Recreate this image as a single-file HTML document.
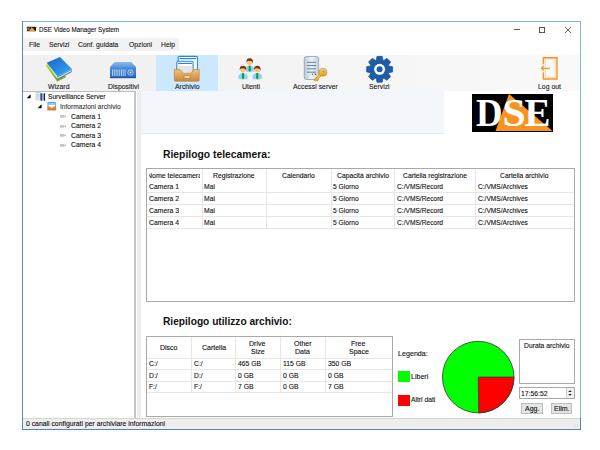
<!DOCTYPE html>
<html><head><meta charset="utf-8"><style>
html,body{margin:0;padding:0;width:600px;height:450px;overflow:hidden;background:#fff;position:relative;}
.r{position:absolute;}
.t{position:absolute;white-space:nowrap;font-family:"Liberation Sans", sans-serif;}
svg text{font-family:"Liberation Serif", serif;}
</style></head><body>
<div class="r" style="left:22px;top:21px;width:559px;height:409px;background:#fff;box-sizing:border-box;border:1px solid #7ab8ea;border-left-color:#4f8cc6;border-bottom-color:#4a86c0;"></div>
<svg class="r" style="left:26px;top:26px" width="12" height="7" viewBox="0 0 12 7"><rect x="0.9" y="0.8" width="9.2" height="4.4" rx="0.4" fill="#1c1c24"/><path d="M3.2 5.2 L5.6 1 L9.6 5.2 Z" fill="#f7a21e"/><rect x="1.5" y="1.6" width="1.3" height="2.8" fill="#8a8a90"/><rect x="3" y="1.6" width="1" height="2.8" fill="#6a6a70"/></svg>
<div class="t" style="left:38.50px;top:25.85px;font-size:7.5px;line-height:7.5px;color:#111;font-weight:400;transform-origin:0 0;transform:scaleX(0.8402);-webkit-text-stroke:0.12px #111;">DSE Video Manager System</div>
<div class="r" style="left:514px;top:29px;width:6px;height:1px;background:#555;"></div>
<div class="r" style="left:539px;top:27px;width:6px;height:6px;box-sizing:border-box;border:1px solid #555;"></div>
<svg class="r" style="left:564px;top:26px" width="8" height="8" viewBox="0 0 8 8"><path d="M1 1 L7 7 M7 1 L1 7" stroke="#333" stroke-width="0.75"/></svg>
<div class="r" style="left:23px;top:38px;width:156px;height:13px;background:#f2f2f2;"></div>
<div class="t" style="left:28.69px;top:41.15px;font-size:7.5px;line-height:7.5px;color:#1a1a1a;font-weight:400;transform-origin:0 0;transform:scaleX(0.9005);-webkit-text-stroke:0.12px #1a1a1a;">File</div>
<div class="t" style="left:49.19px;top:41.15px;font-size:7.5px;line-height:7.5px;color:#1a1a1a;font-weight:400;transform-origin:0 0;transform:scaleX(0.9022);-webkit-text-stroke:0.12px #1a1a1a;">Servizi</div>
<div class="t" style="left:78.00px;top:41.15px;font-size:7.5px;line-height:7.5px;color:#1a1a1a;font-weight:400;transform-origin:0 0;transform:scaleX(0.9041);-webkit-text-stroke:0.12px #1a1a1a;">Conf. guidata</div>
<div class="t" style="left:128.69px;top:41.15px;font-size:7.5px;line-height:7.5px;color:#1a1a1a;font-weight:400;transform-origin:0 0;transform:scaleX(0.9060);-webkit-text-stroke:0.12px #1a1a1a;">Opzioni</div>
<div class="t" style="left:160.69px;top:41.15px;font-size:7.5px;line-height:7.5px;color:#1a1a1a;font-weight:400;transform-origin:0 0;transform:scaleX(0.9069);-webkit-text-stroke:0.12px #1a1a1a;">Help</div>
<div class="r" style="left:23px;top:55px;width:557px;height:36px;background:linear-gradient(to right,#f0f0f0 0%,#f2f2f2 30%,#f6f6f6 65%,#f9f9f9 100%);"></div>
<div class="r" style="left:156px;top:55px;width:62px;height:36px;background:#cce8ff;"></div>
<div class="t" style="left:48.25px;top:82.65px;font-size:7.5px;line-height:7.5px;color:#1a1a1a;font-weight:400;transform-origin:0 0;transform:scaleX(0.9203);-webkit-text-stroke:0.12px #1a1a1a;">Wizard</div>
<div class="t" style="left:107.52px;top:82.65px;font-size:7.5px;line-height:7.5px;color:#1a1a1a;font-weight:400;transform-origin:0 0;transform:scaleX(0.9172);-webkit-text-stroke:0.12px #1a1a1a;">Dispositivi</div>
<div class="t" style="left:174.75px;top:82.65px;font-size:7.5px;line-height:7.5px;color:#1a1a1a;font-weight:400;transform-origin:0 0;transform:scaleX(0.9180);-webkit-text-stroke:0.12px #1a1a1a;">Archivio</div>
<div class="t" style="left:242.00px;top:82.65px;font-size:7.5px;line-height:7.5px;color:#1a1a1a;font-weight:400;transform-origin:0 0;transform:scaleX(0.9187);-webkit-text-stroke:0.12px #1a1a1a;">Utenti</div>
<div class="t" style="left:292.59px;top:82.65px;font-size:7.5px;line-height:7.5px;color:#1a1a1a;font-weight:400;transform-origin:0 0;transform:scaleX(0.9189);-webkit-text-stroke:0.12px #1a1a1a;">Accessi server</div>
<div class="t" style="left:369.17px;top:82.65px;font-size:7.5px;line-height:7.5px;color:#1a1a1a;font-weight:400;transform-origin:0 0;transform:scaleX(0.9174);-webkit-text-stroke:0.12px #1a1a1a;">Servizi</div>
<div class="t" style="left:537.98px;top:82.65px;font-size:7.5px;line-height:7.5px;color:#1a1a1a;font-weight:400;transform-origin:0 0;transform:scaleX(0.9195);-webkit-text-stroke:0.12px #1a1a1a;">Log out</div>
<svg class="r" style="left:44px;top:54px" width="30" height="30" viewBox="0 0 30 30">
<defs><linearGradient id="bk" x1="0" y1="0" x2="1" y2="1"><stop offset="0" stop-color="#1a5fc8"/><stop offset="1" stop-color="#2fb0f2"/></linearGradient>
<linearGradient id="gr" x1="0" y1="0" x2="0" y2="1"><stop offset="0" stop-color="#c2ea2a"/><stop offset="1" stop-color="#62a814"/></linearGradient></defs>
<path d="M1.6 11.5 L13.2 27.6 L22 23.2 L21 21.5 L13.5 25 L3.2 9.8 Z" fill="url(#gr)"/>
<path d="M13.3 22.6 L27.7 15 L27.8 17.9 L13.6 25.5 Z" fill="#1e64bf"/>
<path d="M13.6 23.9 L27.5 16.5" stroke="#f4f4f4" stroke-width="1.1"/>
<path d="M16 3 L27.7 14.7 L13.3 22.3 L2.7 8.7 Z" fill="url(#bk)"/>
</svg>
<svg class="r" style="left:108px;top:60px" width="30" height="20" viewBox="0 0 30 20">
<defs><linearGradient id="nv" x1="0" y1="0" x2="0" y2="1"><stop offset="0" stop-color="#4f8fdc"/><stop offset="1" stop-color="#2a66bd"/></linearGradient>
<linearGradient id="nt" x1="0" y1="0" x2="0" y2="1"><stop offset="0" stop-color="#8dbbee"/><stop offset="1" stop-color="#5c97dc"/></linearGradient></defs>
<path d="M6.7 2 L23.3 2 L28 7 L2 7 Z" fill="url(#nt)"/>
<rect x="2" y="7" width="26" height="11" fill="url(#nv)"/>
<g stroke="#b9d6f6" stroke-width="0.9">
<path d="M4.5 9.5 V16 M6.3 9.5 V16 M8.1 9.5 V16 M9.9 9.5 V16 M11.7 9.5 V16 M13.5 9.5 V16 M15.3 9.5 V16 M17.1 9.5 V16"/></g>
<circle cx="22.5" cy="12.6" r="2.7" fill="none" stroke="#b9d6f6" stroke-width="0.9"/>
<circle cx="22.5" cy="12.4" r="1" fill="#dcebfb"/>
<rect x="2" y="17" width="26" height="1.2" fill="#1d54a3"/>
</svg>
<svg class="r" style="left:172px;top:54px" width="30" height="30" viewBox="0 0 30 30">
<defs><linearGradient id="tr" x1="0" y1="0" x2="0" y2="1"><stop offset="0" stop-color="#f0c27e"/><stop offset="1" stop-color="#c8883a"/></linearGradient></defs>
<rect x="6.2" y="2.4" width="19.2" height="16.5" rx="1.2" fill="#fff" stroke="#2e86d6" stroke-width="1.1"/>
<rect x="7.5" y="4" width="16.5" height="1.2" fill="#2e86d6"/>
<rect x="4.8" y="7.2" width="16.3" height="13" rx="1.2" fill="#fff" stroke="#2e86d6" stroke-width="1.1"/>
<rect x="6" y="8.8" width="14" height="1.2" fill="#2e86d6"/>
<rect x="6" y="12" width="14" height="6" fill="#e4e4e4"/>
<path d="M2.3 15.4 L8 15.4 L11 19 L19 19 L22 15.4 L27.2 15.4 L27.2 26 Q27.2 27.2 26 27.2 L3.5 27.2 Q2.3 27.2 2.3 26 Z" fill="url(#tr)" stroke="#b87a30" stroke-width="0.6"/>
<rect x="12" y="22" width="6" height="2" rx="0.8" fill="#fff" stroke="#a86a25" stroke-width="0.6"/>
</svg>
<svg class="r" style="left:234px;top:54px" width="34" height="30" viewBox="0 0 34 30">
<g transform="translate(15.7,8.0)">
<path d="M-5.2 8.2 Q-5.4 3.4 0 3.2 Q5.4 3.4 5.2 8.2 Q5 10.4 0 10.4 Q-5 10.4 -5.2 8.2 Z" fill="#93d1f5" stroke="#fff" stroke-width="0.6"/>
<path d="M-0.9 3.5 L0.9 3.5 L1.2 8.6 L0 9.8 L-1.2 8.6 Z" fill="#169a34"/>
<circle cx="0" cy="0.2" r="3.1" fill="#f8c28c" stroke="#fff" stroke-width="0.4"/>
<path d="M-3.3 0.4 Q-3.7 -3.7 0.2 -3.8 Q3.7 -3.5 3.3 1 Q2.6 -1.6 -1.2 -1.3 Q-2.6 -0.9 -3.3 0.4 Z" fill="#6e3510"/>
</g><g transform="translate(9,15.5)">
<path d="M-5.2 8.2 Q-5.4 3.4 0 3.2 Q5.4 3.4 5.2 8.2 Q5 10.4 0 10.4 Q-5 10.4 -5.2 8.2 Z" fill="#93d1f5" stroke="#fff" stroke-width="0.6"/>
<path d="M-0.9 3.5 L0.9 3.5 L1.2 8.6 L0 9.8 L-1.2 8.6 Z" fill="#169a34"/>
<circle cx="0" cy="0.2" r="3.1" fill="#f8c28c" stroke="#fff" stroke-width="0.4"/>
<path d="M-3.3 0.4 Q-3.7 -3.7 0.2 -3.8 Q3.7 -3.5 3.3 1 Q2.6 -1.6 -1.2 -1.3 Q-2.6 -0.9 -3.3 0.4 Z" fill="#6e3510"/>
</g><g transform="translate(23.3,15.5)">
<path d="M-5.2 8.2 Q-5.4 3.4 0 3.2 Q5.4 3.4 5.2 8.2 Q5 10.4 0 10.4 Q-5 10.4 -5.2 8.2 Z" fill="#93d1f5" stroke="#fff" stroke-width="0.6"/>
<path d="M-0.9 3.5 L0.9 3.5 L1.2 8.6 L0 9.8 L-1.2 8.6 Z" fill="#169a34"/>
<circle cx="0" cy="0.2" r="3.1" fill="#f8c28c" stroke="#fff" stroke-width="0.4"/>
<path d="M-3.3 0.4 Q-3.7 -3.7 0.2 -3.8 Q3.7 -3.5 3.3 1 Q2.6 -1.6 -1.2 -1.3 Q-2.6 -0.9 -3.3 0.4 Z" fill="#6e3510"/>
</g>
</svg>
<svg class="r" style="left:300px;top:54px" width="30" height="30" viewBox="0 0 30 30">
<defs><linearGradient id="sv" x1="0" y1="0" x2="1" y2="0"><stop offset="0" stop-color="#b8c8d8"/><stop offset="0.5" stop-color="#eef3f8"/><stop offset="1" stop-color="#c0ceda"/></linearGradient>
<linearGradient id="ky" x1="0" y1="0" x2="0" y2="1"><stop offset="0" stop-color="#ffd866"/><stop offset="1" stop-color="#e39a14"/></linearGradient></defs>
<rect x="4.3" y="2.5" width="14.3" height="23" rx="2" fill="url(#sv)" stroke="#8e9eb0" stroke-width="0.8"/>
<g stroke="#5f83a8" stroke-width="1"><path d="M7 8.3 H16 M7 11.5 H16 M7 14.8 H16 M7 18.2 H16"/></g>
<circle cx="12.5" cy="20.3" r="0.8" fill="#2aa83a"/><circle cx="15.3" cy="20.3" r="0.8" fill="#e02020"/>
<path d="M19.5 20.5 L13.8 26 L15.3 27.3 L16.5 26.3 L17.3 27 L18.5 25.8 L17.8 25 L21 22" stroke="#c98a12" stroke-width="0.6" fill="url(#ky)"/>
<circle cx="22.9" cy="18.3" r="4" fill="url(#ky)" stroke="#c98a12" stroke-width="0.6"/>
<circle cx="23.6" cy="17.5" r="1.2" fill="#9aa6b8"/>
</svg>
<svg class="r" style="left:364px;top:54px" width="32" height="32" viewBox="0 0 32 32">
<path d="M12.27 6.08 L13.02 2.36 L18.18 2.36 L18.93 6.08 L19.76 6.43 L22.93 4.32 L26.58 7.97 L24.47 11.14 L24.82 11.97 L28.54 12.72 L28.54 17.88 L24.82 18.63 L24.47 19.46 L26.58 22.63 L22.93 26.28 L19.76 24.17 L18.93 24.52 L18.18 28.24 L13.02 28.24 L12.27 24.52 L11.44 24.17 L8.27 26.28 L4.62 22.63 L6.73 19.46 L6.38 18.63 L2.66 17.88 L2.66 12.72 L6.38 11.97 L6.73 11.14 L4.62 7.97 L8.27 4.32 L11.44 6.43 Z" fill="#1f5ca6" stroke="#1f5ca6" stroke-width="0.8" stroke-linejoin="round"/>
<circle cx="15.6" cy="15.3" r="5.5" fill="#fff"/>
<circle cx="15.6" cy="15.3" r="3" fill="#1f5ca6"/>
</svg>
<svg class="r" style="left:536px;top:54px" width="28" height="30" viewBox="0 0 28 30">
<rect x="9.4" y="4.9" width="9.8" height="18.6" fill="none" stroke="#fbd3a0" stroke-width="0.8"/>
<path d="M7.4 10.3 V3.7 H21 V25 H7.4 V18.3" fill="none" stroke="#f7941d" stroke-width="1.4"/>
<path d="M14 14.3 H5.6 M7.8 12 L5.3 14.3 L7.8 16.6" fill="none" stroke="#f7941d" stroke-width="1.3"/>
</svg>
<div class="r" style="left:23px;top:91px;width:113px;height:328px;background:#fff;box-sizing:border-box;border-top:1px solid #bcbdc2;border-right:2px solid #c2c4ca;border-bottom:1px solid #b4b4b8;"></div>
<div class="r" style="left:137px;top:91px;width:4px;height:327px;background:#ececec;"></div>
<div class="r" style="left:141px;top:91px;width:303px;height:43px;background:#f3f7fb;box-sizing:border-box;border-bottom:1px solid #e3e9f0;"></div>
<svg class="r" style="left:26px;top:94px" width="5" height="5" viewBox="0 0 5 5"><path d="M4.3 0.6 Q4.6 0.4 4.6 0.9 L4.6 3.9 Q4.6 4.3 4.2 4.3 L1 4.3 Q0.6 4.3 0.9 4 Z" fill="#000"/></svg>
<svg class="r" style="left:35px;top:91px" width="11" height="11" viewBox="0 0 11 11"><rect x="0.5" y="0.2" width="2" height="1" fill="#c8d0d8"/><rect x="1" y="1.3" width="4.3" height="7.6" fill="#e6eef7" stroke="#a9bcd0" stroke-width="0.6"/><rect x="2" y="3" width="2.3" height="4" fill="#c5d8ee"/><rect x="5.5" y="2.4" width="4.6" height="7.2" fill="#9aa8e0"/><rect x="5.6" y="2.4" width="1.1" height="7.2" fill="#1f2233"/><rect x="8.9" y="2.4" width="1.1" height="7.2" fill="#1f2233"/></svg>
<div class="t" style="left:48.30px;top:93.15px;font-size:7.5px;line-height:7.5px;color:#111;font-weight:400;transform-origin:0 0;transform:scaleX(0.8837);-webkit-text-stroke:0.12px #111;">Surveillance Server</div>
<svg class="r" style="left:37px;top:103.8px" width="5" height="5" viewBox="0 0 5 5"><path d="M4.3 0.6 Q4.6 0.4 4.6 0.9 L4.6 3.9 Q4.6 4.3 4.2 4.3 L1 4.3 Q0.6 4.3 0.9 4 Z" fill="#000"/></svg>
<svg class="r" style="left:47px;top:101px" width="10" height="11" viewBox="0 0 10 11"><rect x="0.5" y="1" width="8.4" height="5.5" rx="0.5" fill="#52aae6"/><rect x="1.3" y="2.2" width="6.8" height="0.8" fill="#9fd0f2"/><rect x="1.4" y="3.6" width="6.6" height="3" fill="#fafafa"/><path d="M0.3 5.6 L2.8 5.6 L4.7 7.2 L6.6 5.6 L9.1 5.6 L9.1 9.6 L0.3 9.6 Z" fill="#d58b3e"/><path d="M0.3 8.3 L9.1 8.3" stroke="#b86f28" stroke-width="0.5"/></svg>
<div class="t" style="left:59.69px;top:102.65px;font-size:7.5px;line-height:7.5px;color:#3a3a3a;font-weight:400;transform-origin:0 0;transform:scaleX(0.8814);-webkit-text-stroke:0.12px #3a3a3a;">Informazioni archivio</div>
<svg class="r" style="left:59px;top:114.4px" width="8" height="5" viewBox="0 0 8 5"><path d="M1 1 L5 1 L5 3.8 L1 3.8 Z M5 1.8 L7.2 1.2 L7.2 3.4 L5 3 Z" fill="#c6c6c6"/></svg>
<div class="t" style="left:70.80px;top:112.65px;font-size:7.5px;line-height:7.5px;color:#111;font-weight:400;transform-origin:0 0;transform:scaleX(0.9089);-webkit-text-stroke:0.12px #111;">Camera 1</div>
<svg class="r" style="left:59px;top:123.8px" width="8" height="5" viewBox="0 0 8 5"><path d="M1 1 L5 1 L5 3.8 L1 3.8 Z M5 1.8 L7.2 1.2 L7.2 3.4 L5 3 Z" fill="#c6c6c6"/></svg>
<div class="t" style="left:70.80px;top:122.05px;font-size:7.5px;line-height:7.5px;color:#111;font-weight:400;transform-origin:0 0;transform:scaleX(0.9089);-webkit-text-stroke:0.12px #111;">Camera 2</div>
<svg class="r" style="left:59px;top:133.4px" width="8" height="5" viewBox="0 0 8 5"><path d="M1 1 L5 1 L5 3.8 L1 3.8 Z M5 1.8 L7.2 1.2 L7.2 3.4 L5 3 Z" fill="#c6c6c6"/></svg>
<div class="t" style="left:70.80px;top:131.65px;font-size:7.5px;line-height:7.5px;color:#111;font-weight:400;transform-origin:0 0;transform:scaleX(0.9089);-webkit-text-stroke:0.12px #111;">Camera 3</div>
<svg class="r" style="left:59px;top:142.9px" width="8" height="5" viewBox="0 0 8 5"><path d="M1 1 L5 1 L5 3.8 L1 3.8 Z M5 1.8 L7.2 1.2 L7.2 3.4 L5 3 Z" fill="#c6c6c6"/></svg>
<div class="t" style="left:70.80px;top:141.15px;font-size:7.5px;line-height:7.5px;color:#111;font-weight:400;transform-origin:0 0;transform:scaleX(0.9089);-webkit-text-stroke:0.12px #111;">Camera 4</div>
<svg class="r" style="left:472px;top:94px" width="81" height="38" viewBox="0 0 81 38">
<rect width="81" height="38" fill="#000"/>
<path d="M37 0 L80.5 37 L23.5 37 Z" fill="#f7941d"/>
<g font-family="Liberation Serif" font-weight="700" font-size="39.5" fill="#fff"><text x="3.9" y="32" textLength="26.6" lengthAdjust="spacingAndGlyphs">D</text><text x="30.4" y="32" textLength="23.2" lengthAdjust="spacingAndGlyphs">S</text><text x="52.6" y="32" textLength="26" lengthAdjust="spacingAndGlyphs">E</text></g>
</svg>
<div class="t" style="left:163.30px;top:148.51px;font-size:10.5px;line-height:10.5px;color:#111;font-weight:700;transform-origin:0 0;transform:scaleX(0.9842);">Riepilogo telecamera:</div>
<div class="r" style="left:146px;top:168px;width:429px;height:134px;background:#fff;box-sizing:border-box;border:1px solid #a9a9a9;"></div>
<div class="r" style="left:202px;top:169px;width:1px;height:60px;background:#e6e6e6;"></div>
<div class="r" style="left:266px;top:169px;width:1px;height:60px;background:#e6e6e6;"></div>
<div class="r" style="left:331px;top:169px;width:1px;height:60px;background:#e6e6e6;"></div>
<div class="r" style="left:394px;top:169px;width:1px;height:60px;background:#e6e6e6;"></div>
<div class="r" style="left:475px;top:169px;width:1px;height:60px;background:#e6e6e6;"></div>
<div class="r" style="left:147px;top:192px;width:427px;height:1px;background:#e6e6e6;"></div>
<div class="r" style="left:147px;top:204px;width:427px;height:1px;background:#e6e6e6;"></div>
<div class="r" style="left:147px;top:216px;width:427px;height:1px;background:#e6e6e6;"></div>
<div class="r" style="left:147px;top:228px;width:427px;height:1px;background:#e6e6e6;"></div>
<div class="t" style="left:149px;top:171.65px;width:51px;height:9px;overflow:hidden;font-size:7.5px;line-height:7.5px;color:#111;white-space:nowrap;"><div style="position:absolute;left:-2.3px;top:0;transform-origin:0 0;transform:scaleX(0.93);-webkit-text-stroke:0.12px #111">Nome telecamera</div></div>
<div class="t" style="left:213.25px;top:171.65px;font-size:7.5px;line-height:7.5px;color:#111;font-weight:400;transform-origin:0 0;transform:scaleX(0.9049);-webkit-text-stroke:0.12px #111;">Registrazione</div>
<div class="t" style="left:282.06px;top:171.65px;font-size:7.5px;line-height:7.5px;color:#111;font-weight:400;transform-origin:0 0;transform:scaleX(0.9057);-webkit-text-stroke:0.12px #111;">Calendario</div>
<div class="t" style="left:336.50px;top:171.65px;font-size:7.5px;line-height:7.5px;color:#111;font-weight:400;transform-origin:0 0;transform:scaleX(0.9039);-webkit-text-stroke:0.12px #111;">Capacità archivio</div>
<div class="t" style="left:402.52px;top:171.65px;font-size:7.5px;line-height:7.5px;color:#111;font-weight:400;transform-origin:0 0;transform:scaleX(0.9023);-webkit-text-stroke:0.12px #111;">Cartella registrazione</div>
<div class="t" style="left:500.25px;top:171.65px;font-size:7.5px;line-height:7.5px;color:#111;font-weight:400;transform-origin:0 0;transform:scaleX(0.9018);-webkit-text-stroke:0.12px #111;">Cartella archivio</div>
<div class="t" style="left:148.50px;top:183.25px;font-size:7.5px;line-height:7.5px;color:#111;font-weight:400;transform-origin:0 0;transform:scaleX(0.9089);-webkit-text-stroke:0.12px #111;">Camera 1</div>
<div class="t" style="left:203.80px;top:183.25px;font-size:7.5px;line-height:7.5px;color:#111;font-weight:400;transform-origin:0 0;transform:scaleX(0.9083);-webkit-text-stroke:0.12px #111;">Mai</div>
<div class="t" style="left:332.89px;top:183.25px;font-size:7.5px;line-height:7.5px;color:#111;font-weight:400;transform-origin:0 0;transform:scaleX(0.8914);-webkit-text-stroke:0.12px #111;">5 Giorno</div>
<div class="t" style="left:397.00px;top:183.25px;font-size:7.5px;line-height:7.5px;color:#111;font-weight:400;transform-origin:0 0;transform:scaleX(0.8834);-webkit-text-stroke:0.12px #111;">C:/VMS/Record</div>
<div class="t" style="left:477.80px;top:183.25px;font-size:7.5px;line-height:7.5px;color:#111;font-weight:400;transform-origin:0 0;transform:scaleX(0.8804);-webkit-text-stroke:0.12px #111;">C:/VMS/Archives</div>
<div class="t" style="left:148.50px;top:195.25px;font-size:7.5px;line-height:7.5px;color:#111;font-weight:400;transform-origin:0 0;transform:scaleX(0.9089);-webkit-text-stroke:0.12px #111;">Camera 2</div>
<div class="t" style="left:203.80px;top:195.25px;font-size:7.5px;line-height:7.5px;color:#111;font-weight:400;transform-origin:0 0;transform:scaleX(0.9083);-webkit-text-stroke:0.12px #111;">Mai</div>
<div class="t" style="left:332.89px;top:195.25px;font-size:7.5px;line-height:7.5px;color:#111;font-weight:400;transform-origin:0 0;transform:scaleX(0.8914);-webkit-text-stroke:0.12px #111;">5 Giorno</div>
<div class="t" style="left:397.00px;top:195.25px;font-size:7.5px;line-height:7.5px;color:#111;font-weight:400;transform-origin:0 0;transform:scaleX(0.8834);-webkit-text-stroke:0.12px #111;">C:/VMS/Record</div>
<div class="t" style="left:477.80px;top:195.25px;font-size:7.5px;line-height:7.5px;color:#111;font-weight:400;transform-origin:0 0;transform:scaleX(0.8804);-webkit-text-stroke:0.12px #111;">C:/VMS/Archives</div>
<div class="t" style="left:148.50px;top:207.25px;font-size:7.5px;line-height:7.5px;color:#111;font-weight:400;transform-origin:0 0;transform:scaleX(0.9089);-webkit-text-stroke:0.12px #111;">Camera 3</div>
<div class="t" style="left:203.80px;top:207.25px;font-size:7.5px;line-height:7.5px;color:#111;font-weight:400;transform-origin:0 0;transform:scaleX(0.9083);-webkit-text-stroke:0.12px #111;">Mai</div>
<div class="t" style="left:332.89px;top:207.25px;font-size:7.5px;line-height:7.5px;color:#111;font-weight:400;transform-origin:0 0;transform:scaleX(0.8914);-webkit-text-stroke:0.12px #111;">5 Giorno</div>
<div class="t" style="left:397.00px;top:207.25px;font-size:7.5px;line-height:7.5px;color:#111;font-weight:400;transform-origin:0 0;transform:scaleX(0.8834);-webkit-text-stroke:0.12px #111;">C:/VMS/Record</div>
<div class="t" style="left:477.80px;top:207.25px;font-size:7.5px;line-height:7.5px;color:#111;font-weight:400;transform-origin:0 0;transform:scaleX(0.8804);-webkit-text-stroke:0.12px #111;">C:/VMS/Archives</div>
<div class="t" style="left:148.50px;top:219.25px;font-size:7.5px;line-height:7.5px;color:#111;font-weight:400;transform-origin:0 0;transform:scaleX(0.9089);-webkit-text-stroke:0.12px #111;">Camera 4</div>
<div class="t" style="left:203.80px;top:219.25px;font-size:7.5px;line-height:7.5px;color:#111;font-weight:400;transform-origin:0 0;transform:scaleX(0.9083);-webkit-text-stroke:0.12px #111;">Mai</div>
<div class="t" style="left:332.89px;top:219.25px;font-size:7.5px;line-height:7.5px;color:#111;font-weight:400;transform-origin:0 0;transform:scaleX(0.8914);-webkit-text-stroke:0.12px #111;">5 Giorno</div>
<div class="t" style="left:397.00px;top:219.25px;font-size:7.5px;line-height:7.5px;color:#111;font-weight:400;transform-origin:0 0;transform:scaleX(0.8834);-webkit-text-stroke:0.12px #111;">C:/VMS/Record</div>
<div class="t" style="left:477.80px;top:219.25px;font-size:7.5px;line-height:7.5px;color:#111;font-weight:400;transform-origin:0 0;transform:scaleX(0.8804);-webkit-text-stroke:0.12px #111;">C:/VMS/Archives</div>
<div class="t" style="left:163.30px;top:316.21px;font-size:10.5px;line-height:10.5px;color:#111;font-weight:700;transform-origin:0 0;transform:scaleX(0.9683);">Riepilogo utilizzo archivio:</div>
<div class="r" style="left:146px;top:336px;width:247px;height:81px;background:#fff;box-sizing:border-box;border:1px solid #a9a9a9;"></div>
<div class="r" style="left:191px;top:337px;width:1px;height:56px;background:#e6e6e6;"></div>
<div class="r" style="left:235px;top:337px;width:1px;height:56px;background:#e6e6e6;"></div>
<div class="r" style="left:280px;top:337px;width:1px;height:56px;background:#e6e6e6;"></div>
<div class="r" style="left:325px;top:337px;width:1px;height:56px;background:#e6e6e6;"></div>
<div class="r" style="left:147px;top:358px;width:245px;height:1px;background:#e6e6e6;"></div>
<div class="r" style="left:147px;top:369px;width:245px;height:1px;background:#e6e6e6;"></div>
<div class="r" style="left:147px;top:381px;width:245px;height:1px;background:#e6e6e6;"></div>
<div class="r" style="left:147px;top:392px;width:245px;height:1px;background:#e6e6e6;"></div>
<div class="t" style="left:159.98px;top:343.95px;font-size:7.5px;line-height:7.5px;color:#111;font-weight:400;transform-origin:0 0;transform:scaleX(0.9334);-webkit-text-stroke:0.12px #111;">Disco</div>
<div class="t" style="left:201.69px;top:343.95px;font-size:7.5px;line-height:7.5px;color:#111;font-weight:400;transform-origin:0 0;transform:scaleX(0.9335);-webkit-text-stroke:0.12px #111;">Cartella</div>
<div class="t" style="left:249.33px;top:339.95px;font-size:7.5px;line-height:7.5px;color:#111;font-weight:400;transform-origin:0 0;transform:scaleX(0.9331);-webkit-text-stroke:0.12px #111;">Drive</div>
<div class="t" style="left:250.69px;top:348.15px;font-size:7.5px;line-height:7.5px;color:#111;font-weight:400;transform-origin:0 0;transform:scaleX(0.9336);-webkit-text-stroke:0.12px #111;">Size</div>
<div class="t" style="left:293.73px;top:339.95px;font-size:7.5px;line-height:7.5px;color:#111;font-weight:400;transform-origin:0 0;transform:scaleX(0.9334);-webkit-text-stroke:0.12px #111;">Other</div>
<div class="t" style="left:295.09px;top:348.15px;font-size:7.5px;line-height:7.5px;color:#111;font-weight:400;transform-origin:0 0;transform:scaleX(0.9339);-webkit-text-stroke:0.12px #111;">Data</div>
<div class="t" style="left:351.30px;top:339.95px;font-size:7.5px;line-height:7.5px;color:#111;font-weight:400;transform-origin:0 0;transform:scaleX(0.9341);-webkit-text-stroke:0.12px #111;">Free</div>
<div class="t" style="left:348.56px;top:348.15px;font-size:7.5px;line-height:7.5px;color:#111;font-weight:400;transform-origin:0 0;transform:scaleX(0.9332);-webkit-text-stroke:0.12px #111;">Space</div>
<div class="t" style="left:148.89px;top:360.05px;font-size:7.5px;line-height:7.5px;color:#111;font-weight:400;transform-origin:0 0;transform:scaleX(0.9023);-webkit-text-stroke:0.12px #111;">C:/</div>
<div class="t" style="left:193.89px;top:360.05px;font-size:7.5px;line-height:7.5px;color:#111;font-weight:400;transform-origin:0 0;transform:scaleX(0.9023);-webkit-text-stroke:0.12px #111;">C:/</div>
<div class="t" style="left:237.89px;top:360.05px;font-size:7.5px;line-height:7.5px;color:#111;font-weight:400;transform-origin:0 0;transform:scaleX(0.9097);-webkit-text-stroke:0.12px #111;">465 GB</div>
<div class="t" style="left:282.89px;top:360.05px;font-size:7.5px;line-height:7.5px;color:#111;font-weight:400;transform-origin:0 0;transform:scaleX(0.9090);-webkit-text-stroke:0.12px #111;">115 GB</div>
<div class="t" style="left:327.89px;top:360.05px;font-size:7.5px;line-height:7.5px;color:#111;font-weight:400;transform-origin:0 0;transform:scaleX(0.9097);-webkit-text-stroke:0.12px #111;">350 GB</div>
<div class="t" style="left:148.89px;top:371.55px;font-size:7.5px;line-height:7.5px;color:#111;font-weight:400;transform-origin:0 0;transform:scaleX(0.9023);-webkit-text-stroke:0.12px #111;">D:/</div>
<div class="t" style="left:193.89px;top:371.55px;font-size:7.5px;line-height:7.5px;color:#111;font-weight:400;transform-origin:0 0;transform:scaleX(0.9023);-webkit-text-stroke:0.12px #111;">D:/</div>
<div class="t" style="left:237.89px;top:371.55px;font-size:7.5px;line-height:7.5px;color:#111;font-weight:400;transform-origin:0 0;transform:scaleX(0.9104);-webkit-text-stroke:0.12px #111;">0 GB</div>
<div class="t" style="left:282.89px;top:371.55px;font-size:7.5px;line-height:7.5px;color:#111;font-weight:400;transform-origin:0 0;transform:scaleX(0.9104);-webkit-text-stroke:0.12px #111;">0 GB</div>
<div class="t" style="left:327.89px;top:371.55px;font-size:7.5px;line-height:7.5px;color:#111;font-weight:400;transform-origin:0 0;transform:scaleX(0.9104);-webkit-text-stroke:0.12px #111;">0 GB</div>
<div class="t" style="left:148.89px;top:383.05px;font-size:7.5px;line-height:7.5px;color:#111;font-weight:400;transform-origin:0 0;transform:scaleX(0.9000);-webkit-text-stroke:0.12px #111;">F:/</div>
<div class="t" style="left:193.89px;top:383.05px;font-size:7.5px;line-height:7.5px;color:#111;font-weight:400;transform-origin:0 0;transform:scaleX(0.9000);-webkit-text-stroke:0.12px #111;">F:/</div>
<div class="t" style="left:237.89px;top:383.05px;font-size:7.5px;line-height:7.5px;color:#111;font-weight:400;transform-origin:0 0;transform:scaleX(0.9104);-webkit-text-stroke:0.12px #111;">7 GB</div>
<div class="t" style="left:282.89px;top:383.05px;font-size:7.5px;line-height:7.5px;color:#111;font-weight:400;transform-origin:0 0;transform:scaleX(0.9104);-webkit-text-stroke:0.12px #111;">0 GB</div>
<div class="t" style="left:327.89px;top:383.05px;font-size:7.5px;line-height:7.5px;color:#111;font-weight:400;transform-origin:0 0;transform:scaleX(0.9104);-webkit-text-stroke:0.12px #111;">7 GB</div>
<div class="t" style="left:398.40px;top:349.65px;font-size:7.5px;line-height:7.5px;color:#111;font-weight:400;transform-origin:0 0;transform:scaleX(0.9522);-webkit-text-stroke:0.12px #111;">Legenda:</div>
<div class="r" style="left:398px;top:371px;width:12px;height:11px;background:#00ff00;"></div>
<div class="t" style="left:411.00px;top:373.05px;font-size:7.5px;line-height:7.5px;color:#111;font-weight:400;transform-origin:0 0;transform:scaleX(0.9376);-webkit-text-stroke:0.12px #111;">Liberi</div>
<div class="r" style="left:398px;top:395px;width:12px;height:11px;background:#ff0000;"></div>
<div class="t" style="left:411.00px;top:396.35px;font-size:7.5px;line-height:7.5px;color:#111;font-weight:400;transform-origin:0 0;transform:scaleX(0.8969);-webkit-text-stroke:0.12px #111;">Altri dati</div>
<svg class="r" style="left:0;top:0" width="600" height="450">
<circle cx="478.2" cy="377.1" r="35.8" fill="#00ff00" stroke="#333" stroke-width="0.8"/>
<path d="M478.2 377.1 L514.0 377.1 A35.8 35.8 0 0 1 478.80 412.89 Z" fill="#ff0000" stroke="#333" stroke-width="0.8"/>
</svg>
<div class="r" style="left:519px;top:339px;width:56px;height:45px;background:#fff;box-sizing:border-box;border:1px solid #a9a9a9;"></div>
<div class="t" style="left:523.90px;top:342.05px;font-size:7.5px;line-height:7.5px;color:#111;font-weight:400;transform-origin:0 0;transform:scaleX(0.9038);-webkit-text-stroke:0.12px #111;">Durata archivio</div>
<div class="r" style="left:519px;top:387px;width:56px;height:12px;background:#fff;box-sizing:border-box;border:1px solid #a9a9a9;"></div>
<div class="t" style="left:520.80px;top:389.85px;font-size:7.5px;line-height:7.5px;color:#111;font-weight:400;transform-origin:0 0;transform:scaleX(0.9058);-webkit-text-stroke:0.12px #111;">17:56:52</div>
<div class="r" style="left:566px;top:388px;width:8px;height:10px;background:#f0f0f0;box-sizing:border-box;border-left:1px solid #d0d0d0;"></div>
<svg class="r" style="left:567px;top:389px" width="6" height="8" viewBox="0 0 6 8"><path d="M1.2 3 L3 1.2 L4.8 3 Z M1.2 5 L3 6.8 L4.8 5 Z" fill="#222"/></svg>
<div class="r" style="left:521px;top:402.5px;width:22px;height:11.5px;background:#e4e4e4;box-sizing:border-box;border:1px solid #bdbdbd;"></div>
<div class="t" style="left:524.80px;top:405.25px;font-size:7.5px;line-height:7.5px;color:#111;font-weight:400;transform-origin:0 0;transform:scaleX(0.9332);-webkit-text-stroke:0.12px #111;">Agg.</div>
<div class="r" style="left:551px;top:402.5px;width:21px;height:11.5px;background:#e4e4e4;box-sizing:border-box;border:1px solid #bdbdbd;"></div>
<div class="t" style="left:553.72px;top:405.25px;font-size:7.5px;line-height:7.5px;color:#111;font-weight:400;transform-origin:0 0;transform:scaleX(0.9335);-webkit-text-stroke:0.12px #111;">Elim.</div>
<div class="r" style="left:23px;top:418px;width:557px;height:11px;background:#efeded;box-sizing:border-box;border-top:1px solid #d4d4d4;"></div>
<div class="r" style="left:580px;top:418px;width:1px;height:12px;background:#4a86c0;"></div>
<svg class="r" style="left:572px;top:421px" width="7" height="7" viewBox="0 0 7 7"><g fill="#d6d6d6"><rect x="5" y="1" width="1" height="1"/><rect x="3" y="3" width="1" height="1"/><rect x="5" y="3" width="1" height="1"/><rect x="1" y="5" width="1" height="1"/><rect x="3" y="5" width="1" height="1"/><rect x="5" y="5" width="1" height="1"/></g></svg>
<div class="t" style="left:25.50px;top:420.25px;font-size:7.5px;line-height:7.5px;color:#111;font-weight:400;transform-origin:0 0;transform:scaleX(0.9113);-webkit-text-stroke:0.12px #111;">0 canali configurati per archiviare informazioni</div>
</body></html>
